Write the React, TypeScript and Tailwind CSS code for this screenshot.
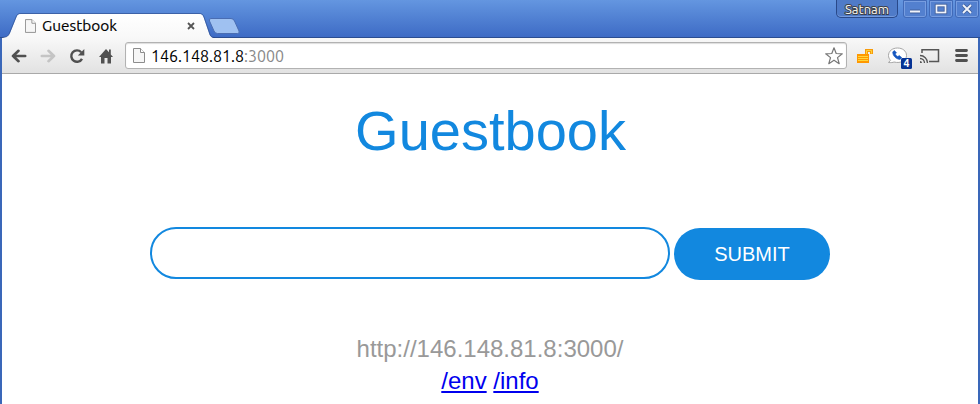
import React from 'react';

const uiFont = "font-['Ubuntu','Noto_Sans',sans-serif]";

function PageIcon({ className }: { className: string }) {
  return (
    <svg className={className} width="12" height="15" viewBox="0 0 12 15" fill="none">
      <path d="M.5.5H7.5L11.5 4.5V14.5H.5Z" fill="#f6f6f6" stroke="#8c8c8c" />
      <path d="M7.5.5V4.5H11.5" fill="#fff" stroke="#8c8c8c" />
    </svg>
  );
}

function Tab() {
  return (
    <div className="relative h-[38px] w-[212px] shrink-0">
      <svg className="absolute left-0 top-0" width="244" height="38" viewBox="0 0 244 38">
        <defs>
          <linearGradient id="tabFill" x1="0" y1="14" x2="0" y2="38" gradientUnits="userSpaceOnUse">
            <stop offset="0" stopColor="#ffffff" />
            <stop offset="1" stopColor="#f8f8f8" />
          </linearGradient>
        </defs>
        <path
          d="M2 38C6 37 8 37 10 33L16.500 17C17.500 14.500 18.500 14 21 14H199C201.500 14 202.500 14.500 203.500 17L209 33C210 36.500 211.500 38 215 38Z"
          fill="url(#tabFill)"
        />
        <path
          d="M2 37.500C6 37 8 37 9.500 33L16 17C17 14.500 18 13.500 21 13.500H199C202 13.500 203 14.500 204 17L209.500 33C210.500 36.500 212 37.500 215 37.500"
          fill="none"
          stroke="#2c4a87"
          strokeOpacity=".6"
        />
        <path
          d="M211 18.500H231Q233.500 18.500 234.500 21L239 31Q240 33.500 237.500 33.500H217.500Q215 33.500 214 31L209.500 21Q208.500 18.500 211 18.500Z"
          fill="#9fc1f1"
          stroke="#4a6db2"
        />
      </svg>
      <div className="relative flex h-full items-start pl-[25px] pt-[19px]">
        <PageIcon className="h-[14px] w-[11px]" />
        <svg className={`${uiFont} -mt-[3px] ml-[6px]`} width="76" height="20">
          <text x="0" y="15" fontSize="14.500" textLength="75" lengthAdjust="spacingAndGlyphs" fill="#000" stroke="#000" strokeWidth=".15">
            Guestbook
          </text>
        </svg>
        <svg className="ml-[69px] mt-[3px]" width="8" height="8" viewBox="0 0 8 8">
          <path d="M1 1L7 7M7 1L1 7" stroke="#555" strokeWidth="1.800" />
        </svg>
      </div>
    </div>
  );
}

function WindowButton({ children }: { children: React.ReactNode }) {
  return (
    <div className="flex h-[18px] w-[24px] items-center justify-center rounded-b-[3px] border border-[#416ab8] bg-[#5380cf] shadow-[inset_0_0_0_1px_#779de0]">
      <svg width="14" height="14" viewBox="0 0 14 14" fill="none" stroke="#f1f4fa" strokeWidth="2">
        {children}
      </svg>
    </div>
  );
}

function WindowControls() {
  return (
    <div className="ml-auto flex items-start gap-[2px] pr-px">
      <div className="mr-[3px] flex h-[18px] w-[62px] justify-center rounded-b-[5px] border border-t-0 border-[#29498a] bg-[#4f7bc8] shadow-[inset_0_-1px_0_#769bdc]">
        <svg className={uiFont} width="48" height="18">
          <text
            x="2"
            y="14"
            fontSize="13"
            textLength="44"
            lengthAdjust="spacingAndGlyphs"
            fill="#f7f5ee"
            stroke="#3d414b"
            strokeWidth="2"
            paintOrder="stroke"
          >
            Satnam
          </text>
        </svg>
      </div>
      <WindowButton>
        <path d="M2 9.500H12" stroke="#42609c" strokeWidth="4" />
        <path d="M2 9.500H12" />
      </WindowButton>
      <WindowButton>
        <rect x="2.500" y="3.500" width="9" height="7" stroke="#42609c" strokeWidth="3.500" />
        <rect x="2.500" y="3.500" width="9" height="7" strokeWidth="1.700" />
      </WindowButton>
      <WindowButton>
        <path d="M3 3L11 11M11 3L3 11" stroke="#42609c" strokeWidth="3.500" />
        <path d="M3 3L11 11M11 3L3 11" strokeWidth="1.800" />
      </WindowButton>
    </div>
  );
}

function ArrowIcon({ forward = false }: { forward?: boolean }) {
  return (
    <svg
      className={forward ? 'rotate-180' : ''}
      width="16"
      height="14"
      viewBox="0 0 16 14"
      fill="none"
      stroke={forward ? '#c4c4c4' : '#505050'}
      strokeWidth="2.600"
      strokeLinecap="round"
      strokeLinejoin="round"
    >
      <path d="M7.500 1.800L2 7L7.500 12.200M2 7H14.200" />
    </svg>
  );
}

function Toolbar() {
  return (
    <div className="mx-[2px] flex h-9 items-center border-b border-[#a9a9a9] bg-linear-to-b from-[#f8f8f8] to-[#e2e2e2] pl-[9px] pr-[10px]">
      <ArrowIcon />
      <div className="ml-[13px]">
        <ArrowIcon forward />
      </div>
      <svg className="ml-[13px]" width="16" height="16" viewBox="0 0 16 16" fill="none">
        <path d="M12.200 4.200A5.700 5.700 0 1 0 13 10.800" stroke="#505050" strokeWidth="2.400" />
        <path d="M15.300 1V7.500H8.800Z" fill="#505050" />
      </svg>
      <svg className="ml-[14px]" width="15" height="16" viewBox="0 0 15 16" fill="#505050">
        <path d="M7 1L0 9H2V15.500H5.500V10H8.500V15.500H12V9H14L11.800 6.500V1.500H10V4.200Z" />
      </svg>
      <div className="ml-[11px] flex h-[27px] w-[722px] items-center rounded-[3px] border border-[#b2b2b2] bg-white pl-[7px] pr-[3px] shadow-[inset_0_1px_1px_#ddd]">
        <PageIcon className="shrink-0" />
        <svg className={`${uiFont} ml-[6px]`} width="136" height="24">
          <text x="0" y="17.500" fontSize="16.500" textLength="133" lengthAdjust="spacingAndGlyphs" fill="#000">
            146.148.81.8
            <tspan fill="#888">:3000</tspan>
          </text>
        </svg>
        <svg className="ml-auto" width="18" height="18" viewBox="0 0 18 18" fill="#fff" stroke="#777" strokeWidth="1.200" strokeLinejoin="round">
          <path d="M9 .8L11.200 6.500L17.300 6.800L12.500 10.600L14.200 16.700L9 13.200L3.800 16.700L5.500 10.600L.7 6.800L6.800 6.500Z" />
        </svg>
      </div>
      <svg className="ml-[10px]" width="17" height="14" viewBox="0 0 17 14" fill="none">
        <path d="M9.500 5V1.500H14.500V5" stroke="#f79b0b" strokeWidth="3" />
        <path d="M9.500 5V1.500H14.500V4.500" stroke="#ffd43b" />
        <rect y="5" width="12" height="9" fill="#ff9800" />
        <path d="M1 7.500H11M1 9.500H11M1 11.500H11" stroke="#ffd83a" />
      </svg>
      <svg className={`${uiFont} ml-[13px] mt-[3px]`} width="25" height="25" viewBox="0 0 25 25">
        <path
          d="M10.500 3C5.500 3 1.500 6 1.500 10.500C1.500 12.500 2.300 14 3.500 15.200L1.500 17.500C4 17.800 6 17.500 7 17C14 18.800 19.500 15.300 19.500 10.500C19.500 6 15.500 3 10.500 3Z"
          fill="#fff"
          stroke="#a6a6a6"
        />
        <path
          d="M7.200 5.500L5.700 7.100C5.600 10.800 9.500 14.500 13 14.400L14.800 12.700L12.300 10.500L10.800 11.600C9.700 11.100 8.700 10 8.300 9L9.500 7.600Z"
          fill="#1557c0"
          stroke="#1557c0"
          strokeWidth=".6"
        />
        <rect x="14" y="13" width="11" height="11" rx="1.500" fill="#073394" />
        <text x="19.500" y="22.300" textAnchor="middle" fontSize="10.500" fontWeight="700" fill="#fff">
          4
        </text>
      </svg>
      <svg className="ml-[8px]" width="20" height="16" viewBox="0 0 20 16" fill="none" stroke="#555" strokeWidth="1.500">
        <path d="M2 5V1.700H18.500V13.500H9" />
        <path d="M0 7.500A7.500 7.500 0 0 1 7.500 15M0 10.500A4.500 4.500 0 0 1 4.500 15" strokeWidth="1.300" />
        <path d="M0 13A2 2 0 0 1 2 15H0Z" fill="#555" stroke="none" />
      </svg>
      <svg className="ml-auto" width="13" height="13" viewBox="0 0 13 13" stroke="#505050" strokeWidth="2.800" strokeLinecap="round">
        <path d="M1.500 1.500H11.500M1.500 6.500H11.500M1.500 11.500H11.500" />
      </svg>
    </div>
  );
}

export default function App() {
  return (
    <div className="flex h-[404px] w-[980px] flex-col overflow-hidden bg-[#3a67b9] font-['Liberation_Sans',Arial,sans-serif]">
      <header className="flex h-[38px] shrink-0 border-b border-[#2b4d90] bg-linear-to-b from-[#6496e0] to-[#3e6bc5]">
        <Tab />
        <WindowControls />
      </header>
      <Toolbar />
      <main className="mx-[2px] flex flex-1 flex-col items-center bg-white">
        <h1 className="mt-[25px] pl-px text-[56px] leading-[64px] text-[#1288df]">Guestbook</h1>
        <form className="mt-16 flex gap-1">
          <input
            aria-label="Message"
            className="h-[52px] w-[520px] rounded-full border-2 border-[#1288df] bg-white px-6 text-xl outline-none"
          />
          <button type="button" className="mt-px h-[52px] w-[156px] rounded-full bg-[#1288df] text-xl text-white">
            SUBMIT
          </button>
        </form>
        <div className="mt-[53px] text-center text-2xl leading-8 text-[#999]">
          <p>http://146.148.81.8:3000/</p>
          <p className="text-[#0000ee]">
            <a className="underline" href="#env">/env</a> <a className="underline" href="#info">/info</a>
          </p>
        </div>
      </main>
    </div>
  );
}
